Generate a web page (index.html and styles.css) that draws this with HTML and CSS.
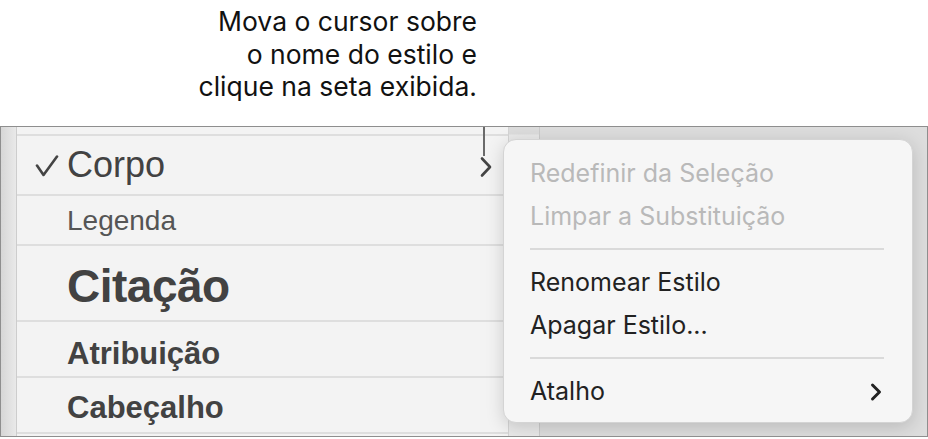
FILE: index.html
```html
<!DOCTYPE html>
<html lang="pt">
<head>
<meta charset="UTF-8">
<meta name="viewport" content="width=device-width, initial-scale=1.0">
<title>Estilos de parágrafo</title>
<link rel="stylesheet" href="styles.css">
</head>
<body>

<div class="callout">
    <p class="callout-text">Mova o cursor sobre<br>o nome do estilo e<br>clique na seta exibida.</p>
</div>

<div class="shot">
    <div class="sidebar"></div>
    <ul class="styles">
        <li class="style-row row-corpo">
            <svg class="check" width="26" height="24" viewBox="0 0 26 24"><path d="M3 10.5 L9.5 20 L23 1.5" fill="none" stroke="#444" stroke-width="2.6" stroke-linecap="round" stroke-linejoin="round"/></svg>
            <span>Corpo</span>
            <svg class="row-arrow" width="14" height="22" viewBox="0 0 14 22"><path d="M3 2.5 L11 11 L3 19.5" fill="none" stroke="#444" stroke-width="2.6" stroke-linecap="round" stroke-linejoin="round"/></svg>
        </li>
        <li class="style-row row-legenda"><span>Legenda</span></li>
        <li class="style-row row-citacao"><span>Citação</span></li>
        <li class="style-row row-atrib"><span>Atribuição</span></li>
        <li class="style-row row-cabec"><span>Cabeçalho</span></li>
    </ul>
    <div class="gutter"></div>
    <div class="backdrop"></div>

    <div class="leader"></div>

    <div class="menu">
        <div class="menu-item disabled">Redefinir da Seleção</div>
        <div class="menu-item disabled">Limpar a Substituição</div>
        <div class="menu-sep"></div>
        <div class="menu-item">Renomear Estilo</div>
        <div class="menu-item">Apagar Estilo...</div>
        <div class="menu-sep"></div>
        <div class="menu-item has-sub">
            <span>Atalho</span>
            <svg width="14" height="20" viewBox="0 0 14 20"><path d="M3.5 3 L10.5 10 L3.5 17" fill="none" stroke="#222" stroke-width="3" stroke-linecap="round" stroke-linejoin="round"/></svg>
        </div>
    </div>
</div>

</body>
</html>
```

FILE: styles.css
```css
body {
    margin: 0;
    padding: 0;
    background: #fff;
    font-family: Inter, "Liberation Sans", sans-serif;
    width: 928px;
    height: 439px;
    overflow: hidden;
}

.callout {
    height: 126px;
    box-sizing: border-box;
    padding: 5px 451px 0 0;
}
.callout-text {
    margin: 0;
    text-align: right;
    font-size: 26.5px;
    line-height: 32.5px;
    color: #111;
}

.shot {
    position: relative;
    display: flex;
    height: 311px;
    box-sizing: border-box;
    border: 1px solid #8e8e8e;
    overflow: hidden;
}
.sidebar {
    width: 15px;
    flex: none;
    background: linear-gradient(to right, #d6d6d6, #e9e9e9);
    border-right: 1px solid #cdcdcd;
}
.styles {
    list-style: none;
    margin: 0;
    padding: 7px 0 0;
    width: 491px;
    flex: none;
    background: #f3f3f3;
    font-family: "Liberation Sans", Arial, sans-serif;
    color: #424242;
}
.style-row {
    display: flex;
    align-items: center;
    box-sizing: border-box;
    border-top: 2px solid #dedede;
    padding-left: 50px;
    position: relative;
}
.style-row span {
    display: block;
}
.row-corpo {
    height: 60px;
    font-size: 36px;
}
.row-corpo .check {
    position: absolute;
    left: 17px;
    top: 19px;
}
.row-corpo .row-arrow {
    position: absolute;
    left: 462px;
    top: 20px;
}
.row-legenda {
    height: 50px;
    font-size: 28px;
    color: #555;
    padding-top: 2px;
}
.row-citacao {
    height: 76px;
    font-size: 46px;
    font-weight: bold;
    letter-spacing: -0.5px;
    padding-top: 6px;
}
.row-atrib {
    height: 56px;
    font-size: 31px;
    font-weight: bold;
    padding-top: 9px;
}
.row-cabec {
    height: 58px;
    font-size: 31px;
    font-weight: bold;
    border-bottom: 2px solid #dedede;
    padding-top: 6px;
}
.gutter {
    width: 30px;
    flex: none;
    background: linear-gradient(to bottom, #dcdcdc 0, #dcdcdc 7px, #e9e9e9 8px);
    border-left: 1px solid #d4d4d4;
    border-right: 1px solid #cbcbcb;
}
.backdrop {
    flex: 1;
    background: #dddddd;
}

.leader {
    position: absolute;
    left: 482px;
    top: -39px;
    width: 2px;
    height: 68px;
    background: #6a6a6a;
}

.menu {
    position: absolute;
    left: 502px;
    top: 12px;
    width: 410px;
    height: 284px;
    box-sizing: border-box;
    padding: 12px 28px 0 26px;
    background: #f6f6f6;
    border: 1px solid #d4d4d4;
    border-radius: 13px;
    box-shadow: 0 4px 18px rgba(0, 0, 0, 0.16);
}
.menu-item {
    height: 43px;
    line-height: 43px;
    font-size: 25px;
    color: #222;
}
.menu-item.disabled {
    color: #b9b9b9;
}
.menu-sep {
    height: 2px;
    margin: 10px 0 11px;
    background: #dadada;
}
.has-sub {
    display: flex;
    justify-content: space-between;
    align-items: center;
}
.has-sub svg {
    margin-right: 1px;
}
```
